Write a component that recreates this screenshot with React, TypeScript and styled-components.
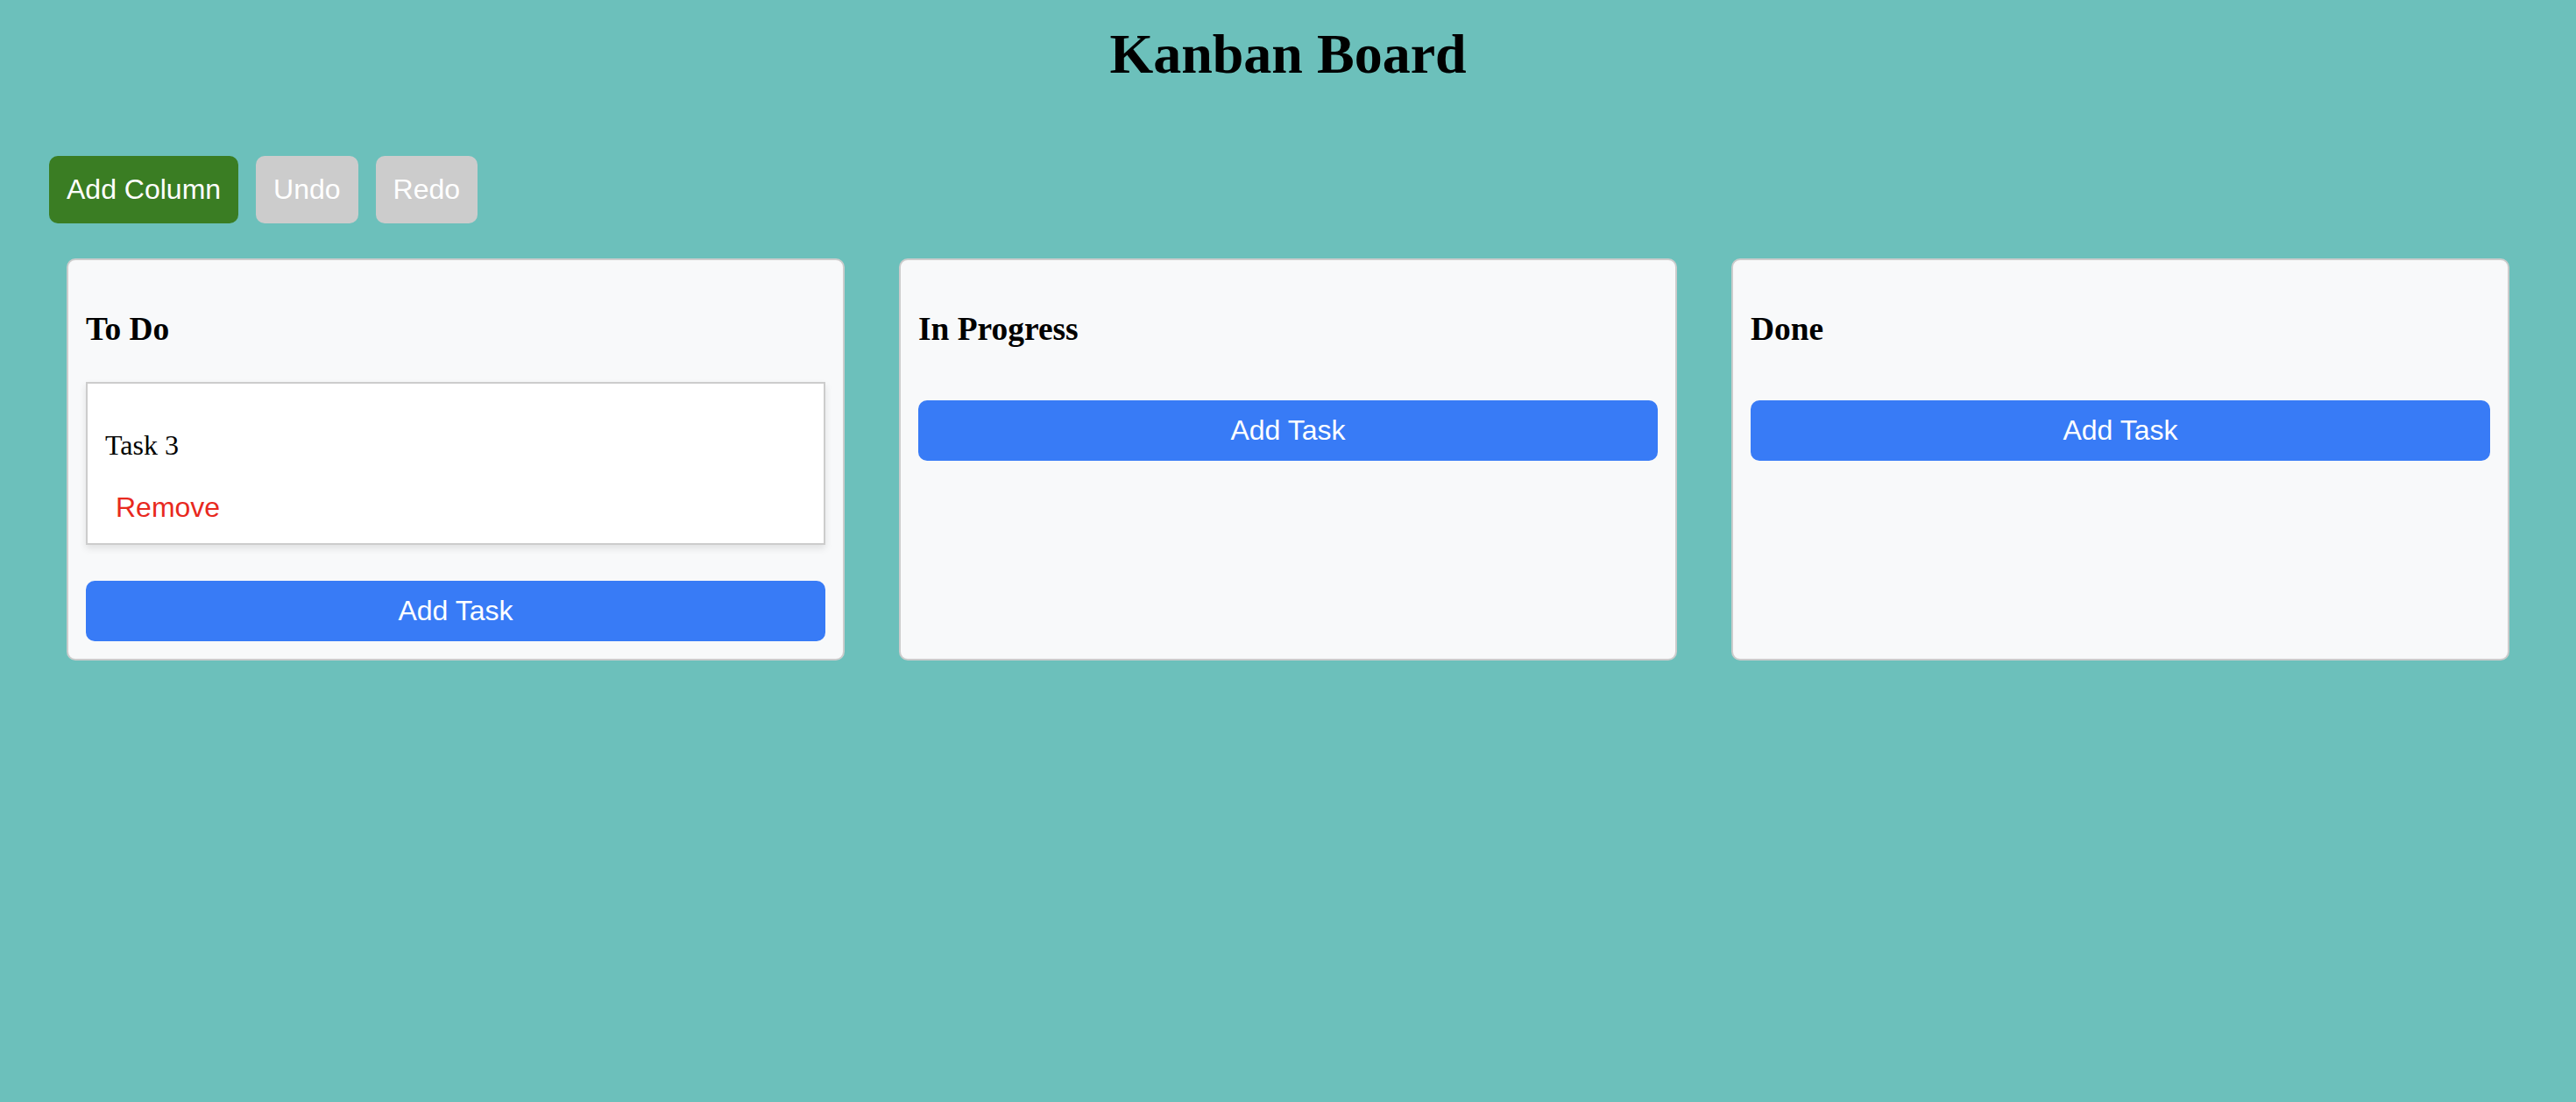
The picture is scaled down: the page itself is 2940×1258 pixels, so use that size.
import React, { useState } from 'react'
import styled, { createGlobalStyle } from 'styled-components'

const GlobalStyle = createGlobalStyle`
  html,
  body {
    margin: 0;
    padding: 0;
  }

  body {
    font-family: 'Liberation Serif', 'Times New Roman', serif;
    color: #000;
  }
`

const SANS = `'Liberation Sans', Arial, Helvetica, sans-serif`

export const StyledPage = styled.div`
  display: flex;
  flex-direction: column;
  min-height: 100vh;
  box-sizing: border-box;
  padding-top: 25px;
  background: #6cc0bb;
`

export const Title = styled.h1`
  margin: 0 0 39px;
  font-size: 64px;
  font-weight: bold;
  line-height: normal;
  text-align: center;
`

export const Toolbar = styled.div`
  display: flex;
  gap: 20px;
  margin: 40px 56px;
`

export const ToolButton = styled.button<{ $primary?: boolean }>`
  padding: 20px;
  border: none;
  border-radius: 10px;
  background: ${(p) => (p.$primary ? '#3a7d23' : '#cccccc')};
  color: #fff;
  font-family: ${SANS};
  font-size: 32px;
  line-height: normal;
  cursor: ${(p) => (p.$primary ? 'pointer' : 'default')};
`

export const Board = styled.div`
  display: grid;
  grid-template-columns: repeat(3, 1fr);
  gap: 62px;
  padding: 0 76px;
`

export const Column = styled.div`
  display: flex;
  flex-direction: column;
  box-sizing: border-box;
  padding: 20px;
  border: 2px solid #cccccc;
  border-radius: 10px;
  background: #f8f9fa;
`

export const ColumnTitle = styled.h3`
  margin: 37px 0 39px;
  font-size: 37.44px;
  font-weight: bold;
  line-height: normal;
`

export const TaskList = styled.div`
  display: flex;
  flex-direction: column;
`

export const TaskCard = styled.div`
  margin-bottom: 20px;
  padding: 20px;
  border: 2px solid #cccccc;
  background: #fff;
  box-shadow: 0 4px 8px rgba(0, 0, 0, 0.1);
`

export const TaskText = styled.p`
  margin: 32px 0;
  font-size: 32px;
  line-height: normal;
`

export const RemoveButton = styled.button`
  padding: 2px 12px;
  border: none;
  background: none;
  color: #e8291e;
  font-family: ${SANS};
  font-size: 32px;
  line-height: normal;
  cursor: pointer;
`

export const AddTaskButton = styled.button`
  display: block;
  width: 100%;
  margin-top: 21px;
  padding: 16px;
  border: none;
  border-radius: 10px;
  background: #387bf6;
  color: #fff;
  font-family: ${SANS};
  font-size: 32px;
  line-height: normal;
  cursor: pointer;
`

interface Task {
  id: number
  title: string
}

interface ColumnData {
  id: string
  title: string
  tasks: Task[]
}

const initialColumns: ColumnData[] = [
  { id: 'todo', title: 'To Do', tasks: [{ id: 3, title: 'Task 3' }] },
  { id: 'progress', title: 'In Progress', tasks: [] },
  { id: 'done', title: 'Done', tasks: [] },
]

export default function App() {
  const [columns] = useState<ColumnData[]>(initialColumns)

  return (
    <StyledPage>
      <GlobalStyle />
      <Title>Kanban Board</Title>

      <Toolbar>
        <ToolButton $primary>Add Column</ToolButton>
        <ToolButton>Undo</ToolButton>
        <ToolButton>Redo</ToolButton>
      </Toolbar>

      <Board>
        {columns.map((col) => (
          <Column key={col.id}>
            <ColumnTitle>{col.title}</ColumnTitle>
            {col.tasks.length ? (
              <TaskList>
                {col.tasks.map((t) => (
                  <TaskCard key={t.id}>
                    <TaskText>{t.title}</TaskText>
                    <RemoveButton>Remove</RemoveButton>
                  </TaskCard>
                ))}
              </TaskList>
            ) : null}
            <AddTaskButton>Add Task</AddTaskButton>
          </Column>
        ))}
      </Board>
    </StyledPage>
  )
}
